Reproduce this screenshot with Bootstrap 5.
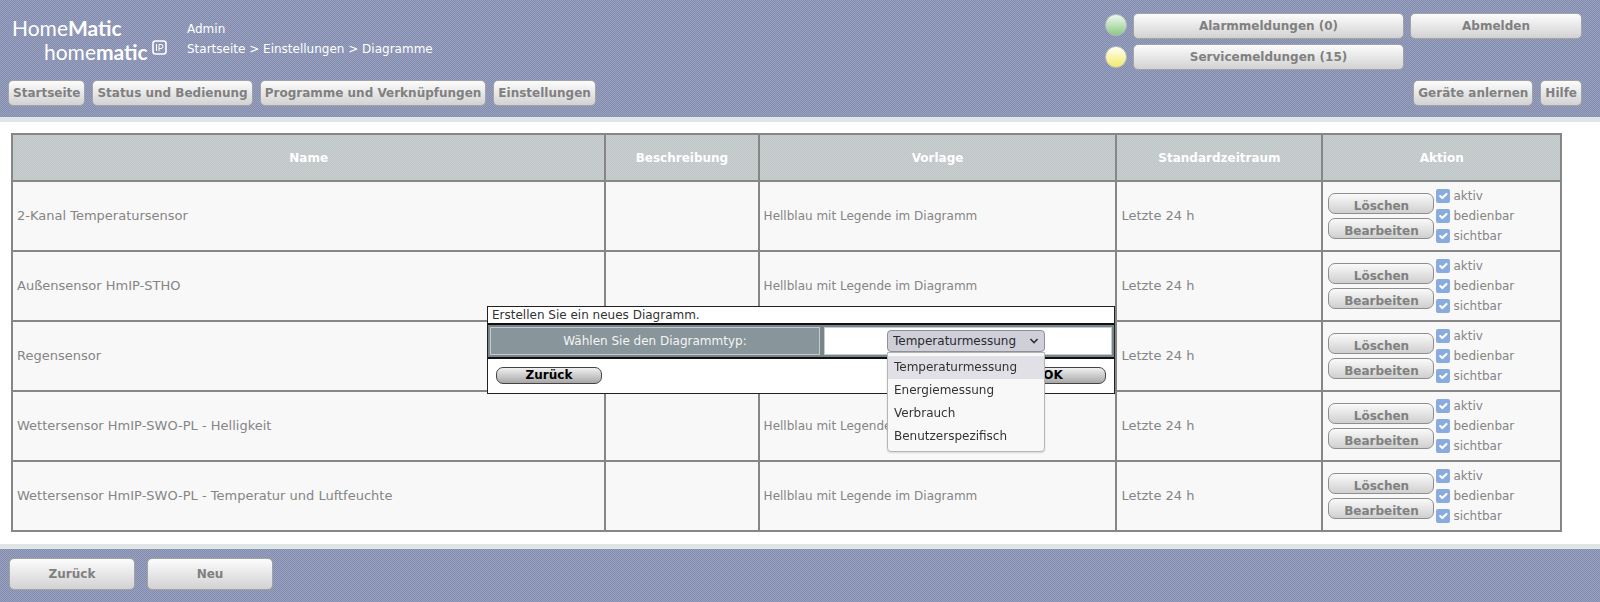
<!DOCTYPE html>
<html lang="de">
<head>
<meta charset="utf-8">
<meta name="viewport" content="width=device-width, initial-scale=1">
<title>HomeMatic – Diagramme</title>
<link href="https://cdn.jsdelivr.net/npm/bootstrap@5.3.0/dist/css/bootstrap.min.css" rel="stylesheet">
<style>
body{font:12px/20px "DejaVu Sans",Verdana,sans-serif;color:#858585;background:#fff;min-height:100vh}
.bar-blue{background:repeating-conic-gradient(#838cad 0 25%,#98a1bf 0 50%) 0 0/2px 2px;color:#fff}
.bar-top{border-bottom:5px solid #e0e5e6;padding:13px 18px 11px 8px}
.bar-bottom{border-top:5px solid #e0e5e6;padding:9px 9px 14px;gap:12px}
.brand-block{width:173px;padding:3px 0 0 4px;font-family:Lato,sans-serif;font-size:21px;line-height:24px}
.brand-ip{padding-left:32px}
.crumbs{padding-top:6px}
.crumbs a{color:inherit;text-decoration:none}
.btn-ccu{--bs-btn-font-size:12px;--bs-btn-font-weight:700;--bs-btn-color:#808080;--bs-btn-line-height:18px;--bs-btn-padding-y:3px;--bs-btn-padding-x:4px;--bs-btn-border-radius:5px;--bs-btn-border-color:#a3a3a3;background:linear-gradient(#fcfcfc,#d2d2d2)}
.head-tools{gap:6px}
.led-stack{gap:10px;padding-top:1px}
.msg-stack{gap:5px}
.nav-line{gap:7px;margin-top:10px}
.w-msg{width:271px}.w-out{width:172px}
.btn-foot{width:126px;--bs-btn-padding-y:6px}
.led{width:22px;height:22px;border:1px solid #b5bdc0;border-radius:50%}
.led-g{background:linear-gradient(#f0f8ef,#8acb82)}
.led-y{background:linear-gradient(#fffff4,#f3ea68)}
.page-main{padding:11px 38px 12px 11px}
.chart-table{table-layout:fixed;width:100%;border-collapse:collapse;background:#f8f8f8}
.chart-table th,.chart-table td{border:2px solid #868686;padding:0 4px}
.chart-table th{height:47px;text-align:center;color:#fff;background:repeating-conic-gradient(#bfc6c8 0 25%,#c9cecf 0 50%) 0 0/2px 2px}
.chart-table td{height:70px}
.chart-table .cell-wide{font-size:13px}
.chart-table .cell-act{padding-left:5px}
.c1{width:38.3%}.c2{width:9.9%}.c3{width:23.1%}.c4{width:13.3%}
.btn-row{width:106px;border:1px solid #8e8e8e;border-radius:7px;height:21px;padding:3px 0 0;font-weight:700;line-height:18px;color:#808080;background:linear-gradient(#fafafa,#cfcfcf)}
.chk-list{margin-left:2px}
.chk .form-check-input{width:14px;height:14px;margin:0;border-radius:2px;border:0;background-color:#8aabdd;background-size:14px}
.chk label{margin-left:3px}
.dlg{position:fixed;top:306px;left:50%;transform:translateX(-50%);width:628px;margin-left:1px;background:#fff;color:#333;border:1px solid #222}
.dlg-title{line-height:16px;padding:0 4px}
.dlg-row{border:solid #111;border-width:2px 0;background:#78868a;padding:2px;gap:4px;height:36px}
.dlg-label{width:330px;background:#88959a;border:1px solid #c5cccd;color:#f4f4f4}
.dlg-field{background:#fff;border:1px solid #c5cccd;padding-right:4px}
.dlg-foot{padding:8px;height:34px}
.btn-dlg{width:106px;height:17px;padding:0;border:1px solid #444;border-radius:7px;font-weight:700;line-height:15px;color:#000;background:linear-gradient(#f0f0f0,#a8a8a8)}
.type-box{width:158px}
.type-select{display:block;appearance:none;width:158px;height:22px;border:1px solid #8f8f9d;border-radius:4px;padding:0 5px;line-height:20px;color:#2b2a33;background:#cfcfd8}
.type-arrow{position:absolute;right:6px;top:6px}
.type-menu{position:absolute;top:22px;left:0;min-width:0;width:158px;margin:0;padding:3px 0;border:1px solid #b5b5b5;border-radius:0 0 4px 4px;background:#f8f8f8;font-size:12px;color:#333;box-shadow:0 1px 2px #0002}
.type-menu .dropdown-item{padding:0 6px;line-height:23px;color:#333}
.type-menu .active{background:#e0e0e6}
</style>
</head>
<body>
<header class="bar-blue bar-top">
  <div class="d-flex align-items-start head-tools">
    <div class="brand-block"><div>Home<b>Matic</b></div>
      <div class="brand-ip d-flex">home<b>matic</b><svg width="15" height="15" viewBox="0 0 15 15" class="ms-1" fill="none" stroke="#fff" aria-hidden="true"><rect x="1" y="1" width="13" height="13" rx="2.5" stroke-width="1.6"/><path d="M4.500 4v7M7 11V4.500h2a2 2 0 010 4H7"/></svg></div></div>
    <div class="crumbs flex-grow-1"><div>Admin</div><nav aria-label="Pfad"><a href="#">Startseite</a> &gt; <a href="#">Einstellungen</a> &gt; <a href="#">Diagramme</a></nav></div>
    <div class="d-flex flex-column led-stack"><span class="led led-g"></span><span class="led led-y"></span></div>
    <div class="d-flex flex-column msg-stack"><button class="btn btn-ccu w-msg">Alarmmeldungen (0)</button><button class="btn btn-ccu w-msg">Servicemeldungen (15)</button></div>
    <button class="btn btn-ccu w-out">Abmelden</button>
  </div>
  <nav class="d-flex nav-line">
    <button class="btn btn-ccu">Startseite</button><button class="btn btn-ccu">Status und Bedienung</button><button class="btn btn-ccu">Programme und Verknüpfungen</button><button class="btn btn-ccu me-auto">Einstellungen</button><button class="btn btn-ccu">Geräte anlernen</button><button class="btn btn-ccu">Hilfe</button>
  </nav>
</header>
<main class="page-main">
<table class="chart-table">
<thead><tr><th class="c1">Name</th><th class="c2">Beschreibung</th><th class="c3">Vorlage</th><th class="c4">Standardzeitraum</th><th>Aktion</th></tr></thead>
<tbody id="rows"></tbody>
</table>
</main>
<footer class="bar-blue bar-bottom d-flex"><button class="btn btn-ccu btn-foot">Zurück</button><button class="btn btn-ccu btn-foot">Neu</button></footer>
<section class="dlg" role="dialog" aria-labelledby="dlgTitle">
  <div class="dlg-title" id="dlgTitle">Erstellen Sie ein neues Diagramm.</div>
  <div class="dlg-row d-flex">
    <label class="dlg-label d-flex align-items-center justify-content-center" for="typ">Wählen Sie den Diagrammtyp:</label>
    <div class="dlg-field flex-grow-1 d-flex align-items-center justify-content-center">
      <div class="type-box position-relative">
        <select id="typ" class="type-select"><option>Temperaturmessung</option><option>Energiemessung</option><option>Verbrauch</option><option>Benutzerspezifisch</option></select>
        <svg class="type-arrow" width="10" height="10" viewBox="0 0 10 10" fill="none" stroke="#2b2a33" stroke-width="1.6" aria-hidden="true"><path d="M1.500 3L5 6.700L8.500 3"/></svg>
        <ul class="dropdown-menu show type-menu"><li><a class="dropdown-item active" href="#">Temperaturmessung</a></li><li><a class="dropdown-item" href="#">Energiemessung</a></li><li><a class="dropdown-item" href="#">Verbrauch</a></li><li><a class="dropdown-item" href="#">Benutzerspezifisch</a></li></ul>
      </div>
    </div>
  </div>
  <div class="dlg-foot d-flex justify-content-between"><button class="btn-dlg">Zurück</button><button class="btn-dlg">OK</button></div>
</section>
<script src="https://cdn.jsdelivr.net/npm/bootstrap@5.3.0/dist/js/bootstrap.bundle.min.js"></script>
<script>
const names=["2-Kanal Temperatursensor","Außensensor HmIP-STHO","Regensensor","Wettersensor HmIP-SWO-PL - Helligkeit","Wettersensor HmIP-SWO-PL - Temperatur und Luftfeuchte"];
document.getElementById("rows").innerHTML=names.map((n,i)=>`<tr><td class="cell-wide">${n}</td><td></td><td>Hellblau mit Legende im Diagramm</td><td class="cell-wide">Letzte 24 h</td><td class="cell-act"><div class="d-flex align-items-center"><div class="d-flex flex-column gap-1"><button class="btn-row">Löschen</button><button class="btn-row">Bearbeiten</button></div><div class="chk-list">${["aktiv","bedienbar","sichtbar"].map(c=>`<div class="chk d-flex align-items-center"><input class="form-check-input" type="checkbox" checked id="${c+i}"><label for="${c+i}">${c}</label></div>`).join("")}</div></div></td></tr>`).join("");
</script>
</body>
</html>
